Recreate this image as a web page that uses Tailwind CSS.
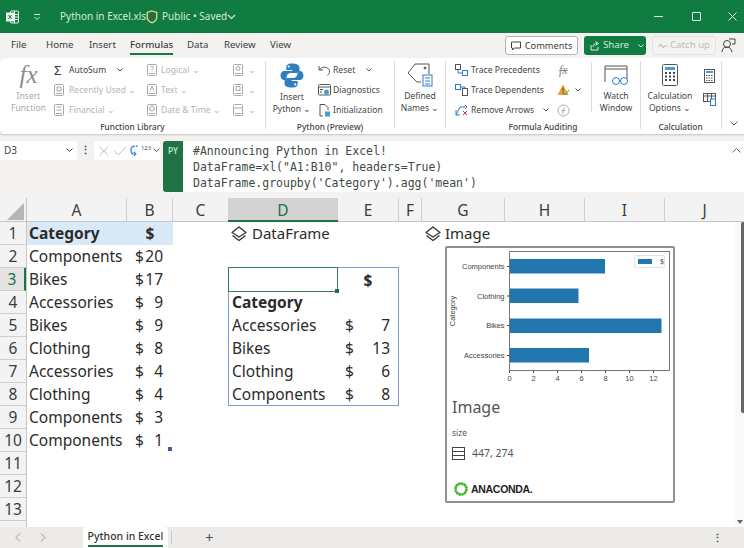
<!DOCTYPE html>
<html lang="en">
<head>
<meta charset="UTF-8">
<title>Python in Excel</title>
<script src="https://cdn.jsdelivr.net/npm/@tailwindcss/browser@4"></script>
</head>
<body class="w-[744px] h-[548px] overflow-hidden bg-[#f3f2f1] font-['Noto_Sans',sans-serif] text-[#333]">

<!-- title bar -->
<div class="h-[33px] bg-[#107c41] flex items-center text-[10px] text-[#d5eadd]">
  <svg class="ml-[6px] w-[13px] h-[14px]" viewBox="0 0 13 14" fill="none" stroke="#e8f3ec"><rect x="4.5" y="1" width="8" height="12" rx="1"/><path d="M4.5 4.5h8M4.5 7h8M4.5 9.500h8M8.500 1v12"/><rect x="0.500" y="3" width="7" height="8" fill="#e8f3ec"/><path d="M2.500 5l3 4M5.500 5l-3 4" stroke="#107c41"/></svg>
  <svg class="ml-[14px] w-[8px] h-[8px]" viewBox="0 0 8 8" fill="none" stroke="#d5eadd"><path d="M1 1.500h6M1.500 4l2.500 2.500L6.500 4"/></svg>
  <span class="ml-[19px] w-[81px] whitespace-nowrap">Python in Excel.xlsx</span>
  <svg class="ml-[5px] w-[12px] h-[14px]" viewBox="0 0 12 14" fill="#2d6a3d" stroke="#cfe39a" stroke-width="1.300"><path d="M6 1l4.800 1.500v4.500c0 3-2.300 4.800-4.800 5.800C3.500 11.800 1.200 10 1.200 7V2.500z"/></svg>
  <span class="ml-[4px] w-[63px] whitespace-nowrap">Public • Saved</span>
  <svg class="ml-[2px] w-[9px] h-[6px]" viewBox="0 0 9 6" fill="none" stroke="#d5eadd" stroke-width="1.200"><path d="M1 1l3.500 3.500L8 1"/></svg>
  <div class="ml-auto flex items-center">
    <div class="w-[9px] h-px bg-[#d5eadd]"></div>
    <div class="ml-[29px] w-[9px] h-[9px] border border-[#e2f0e7] rounded-[1px]"></div>
    <svg class="ml-[27px] mr-[7px] w-[9px] h-[9px]" viewBox="0 0 9 9" fill="none" stroke="#e2f0e7"><path d="M0.500 0.500l8 8M8.500 0.500l-8 8"/></svg>
  </div>
</div>

<!-- tab row -->
<div class="h-[25px] flex items-center text-[9.700px] text-[#3c3c3c] relative">
  <span class="ml-[11px] w-[35px]">File</span>
  <span class="w-[43px]">Home</span>
  <span class="w-[41px]">Insert</span>
  <span class="w-[57px] font-medium relative">Formulas<span class="absolute left-0 top-[15px] w-[43px] h-[2px] bg-[#107c41]"></span></span>
  <span class="w-[37px]">Data</span>
  <span class="w-[46px]">Review</span>
  <span>View</span>
  <div class="ml-auto flex items-center">
    <div class="w-[73px] h-[19px] bg-white border border-[#b5b3b1] rounded-[3px] flex items-center justify-center gap-[4px] text-[9.300px]">
      <svg class="w-[10px] h-[10px]" viewBox="0 0 10 10" fill="none" stroke="#444"><path d="M0.500 1h9v6h-6l-2 2V7h-1z"/></svg>
      <span>Comments</span>
    </div>
    <div class="ml-[6px] w-[62px] h-[19px] bg-[#107c41] rounded-[3px] flex items-center pl-[6px] text-[#d5eadd]">
      <svg class="w-[10px] h-[10px]" viewBox="0 0 10 10" fill="none" stroke="#e2f0e7"><path d="M1 4v5h7V6M3 6c0-3 2-3.500 4-3.500M5.500 0.500l3 2-3 2"/></svg>
      <span class="ml-[3px]">Share</span>
      <svg class="ml-[9px] w-[6px] h-[4px]" viewBox="0 0 6 4" fill="none" stroke="#e2f0e7"><path d="M0.500 0.500L3 3l2.500-2.500"/></svg>
    </div>
    <div class="ml-[6px] w-[64px] h-[19px] border border-[#e3e1df] rounded-[3px] flex items-center justify-center gap-[3px] text-[#bdbbb9]">
      <svg class="w-[9px] h-[6px]" viewBox="0 0 9 6" fill="none" stroke="#bdbbb9"><path d="M0 3h2l1-2 2 4 1-2h3"/></svg>
      <span>Catch up</span>
    </div>
    <svg class="ml-[5px] mr-[8px] w-[15px] h-[15px]" viewBox="0 0 15 15" fill="none" stroke="#444"><circle cx="6" cy="6" r="3.500"/><path d="M1 14c0-3 2-5 5-5s4 2 5 5M8 1h6v5h-3"/></svg>
  </div>
</div>

<!-- ribbon -->
<div class="h-[76px] bg-white rounded-l-[4px] shadow-[0_1px_2px_rgba(0,0,0,0.2)] flex pt-[2px] text-[8.600px] text-[#4a4a4a] relative">

  <!-- function library -->
  <div class="w-[265px] flex flex-col">
    <div class="h-[60px] flex">
      <div class="w-[54px] flex flex-col items-center pl-[3px] text-[#a8a8a8] leading-[12px]">
        <span class="font-['Liberation_Serif',serif] italic text-[25px] leading-[30px] text-[#8c8c8c]">fx</span>
        <span>Insert</span>
        <span>Function</span>
      </div>
      <div class="w-[93px] flex flex-col">
        <div class="h-[20px] flex items-center text-[#3c3c3c]"><span class="w-[15px] text-[13px] leading-none">Σ</span>AutoSum
          <svg class="ml-[11px] w-[6px] h-[4px]" viewBox="0 0 6 4" fill="none" stroke="#555"><path d="M0.500 0.500L3 3l2.500-2.500"/></svg></div>
        <div class="h-[20px] flex items-center text-[#b4b4b4]"><svg class="w-[10px] h-[12px] mr-[5px]" viewBox="0 0 10 12" fill="none" stroke="#a8a8a8"><rect x="0.500" y="0.500" width="9" height="11" rx="1"/><path d="M3 3h4v4H3zM2 9.500h6"/></svg>Recently Used ⌄</div>
        <div class="h-[20px] flex items-center text-[#b4b4b4]"><svg class="w-[10px] h-[12px] mr-[5px]" viewBox="0 0 10 12" fill="none" stroke="#a8a8a8"><rect x="0.500" y="0.500" width="9" height="11" rx="1"/><path d="M2.500 3h5M2.500 6h5M2 9.500h6"/></svg>Financial ⌄</div>
      </div>
      <div class="w-[86px] flex flex-col text-[#b4b4b4]">
        <div class="h-[20px] flex items-center"><svg class="w-[10px] h-[12px] mr-[4px]" viewBox="0 0 10 12" fill="none" stroke="#a8a8a8"><rect x="0.500" y="0.500" width="9" height="11" rx="1"/><path d="M3.500 3.500c0-1.500 3-1.500 3 0 0 1-1.500 1-1.500 2.500M2 9.500h6"/></svg>Logical ⌄</div>
        <div class="h-[20px] flex items-center"><svg class="w-[10px] h-[12px] mr-[4px]" viewBox="0 0 10 12" fill="none" stroke="#a8a8a8"><rect x="0.500" y="0.500" width="9" height="11" rx="1"/><path d="M3 7l2-5 2 5M2 9.500h6"/></svg>Text ⌄</div>
        <div class="h-[20px] flex items-center"><svg class="w-[10px] h-[12px] mr-[4px]" viewBox="0 0 10 12" fill="none" stroke="#a8a8a8"><rect x="0.500" y="0.500" width="9" height="11" rx="1"/><circle cx="5" cy="4.500" r="2.500"/><path d="M2 9.500h6"/></svg>Date &amp; Time ⌄</div>
      </div>
      <div class="flex flex-col text-[#b4b4b4]">
        <div class="h-[20px] flex items-center"><svg class="w-[10px] h-[12px] mr-[5px]" viewBox="0 0 10 12" fill="none" stroke="#a8a8a8"><rect x="0.500" y="0.500" width="9" height="11" rx="1"/><circle cx="5" cy="4.500" r="2"/><path d="M2 9.500h6"/></svg>⌄</div>
        <div class="h-[20px] flex items-center"><svg class="w-[10px] h-[12px] mr-[5px]" viewBox="0 0 10 12" fill="none" stroke="#a8a8a8"><rect x="0.500" y="0.500" width="9" height="11" rx="1"/><path d="M3 2.500h4v4H3zM2 9.500h6"/></svg>⌄</div>
        <div class="h-[20px] flex items-center"><svg class="w-[10px] h-[12px] mr-[5px]" viewBox="0 0 10 12" fill="none" stroke="#a8a8a8"><rect x="0.500" y="0.500" width="9" height="11" rx="1"/><path d="M0.500 4h9M2 9.500h6"/></svg>⌄</div>
      </div>
    </div>
    <div class="text-center text-[8.300px] font-medium leading-[13px] text-[#444]">Function Library</div>
  </div>
  <div class="w-px h-[68px] mt-[1px] bg-[#dcdcdc]"></div>

  <!-- python -->
  <div class="w-[128px] flex flex-col">
    <div class="h-[60px] flex">
      <div class="w-[52px] flex flex-col items-center leading-[12px] text-[#444]">
        <svg class="mt-[3px] w-[24px] h-[25px]" viewBox="0 0 24 25"><path fill="#2f7fc1" d="M11.800 0.500c-4.500 0-5.500 1.800-5.500 3.800v2.700h6v1H4.200C2 8 0.500 9.800 0.500 12.500s1.500 4.500 3.700 4.500h2.300v-3c0-2.300 2-4 4.200-4h5.500c1.800 0 3.300-1.500 3.300-3.300V4.300C19 2 16.800 0.500 11.800 0.500zM8.700 2.500a1.100 1.100 0 1 1 0 2.200 1.100 1.100 0 0 1 0-2.200z"/><path fill="#2f7fc1" d="M12.200 24.500c4.500 0 5.500-1.800 5.500-3.800V18h-6v-1h8.100c2.200 0 3.700-1.800 3.700-4.500S22 8 19.800 8h-2.300v3c0 2.300-2 4-4.200 4H7.800C6 15 4.500 16.500 4.500 18.300v2.400C4.500 23 7.200 24.500 12.200 24.500zM15.300 22.500a1.100 1.100 0 1 1 0-2.200 1.100 1.100 0 0 1 0 2.200z"/></svg>
        <span class="mt-[3px]">Insert</span>
        <span class="whitespace-nowrap">Python ⌄</span>
      </div>
      <div class="flex flex-col text-[#444]">
        <div class="h-[20px] flex items-center"><svg class="w-[13px] h-[11px] mr-[2px]" viewBox="0 0 13 11" fill="none" stroke="#555"><path d="M1 1v4h4M1.500 5c2-4 9-4 10 1 .3 2-1 3.500-2 4.500"/></svg>Reset
          <svg class="ml-[11px] w-[6px] h-[4px]" viewBox="0 0 6 4" fill="none" stroke="#555"><path d="M0.500 0.500L3 3l2.500-2.500"/></svg></div>
        <div class="h-[20px] flex items-center"><svg class="w-[13px] h-[12px] mr-[2px]" viewBox="0 0 13 12" fill="none" stroke="#555"><rect x="0.500" y="0.500" width="12" height="10.500" rx="1"/><path d="M0.500 3h12M2 5.500h3M2 8h2"/><circle cx="8.500" cy="8" r="2.500" fill="#4a9bd4" stroke="none"/></svg>Diagnostics</div>
        <div class="h-[20px] flex items-center"><svg class="w-[13px] h-[13px] mr-[2px]" viewBox="0 0 13 13" fill="none" stroke="#555"><path d="M2 12V0.500h5l3 3V6M2 12h3"/><rect x="7" y="7.500" width="5" height="5" fill="#4a9bd4" stroke="none"/></svg>Initialization</div>
      </div>
    </div>
    <div class="text-center text-[8.300px] font-medium leading-[13px] text-[#444]">Python (Preview)</div>
  </div>
  <div class="w-px h-[68px] mt-[1px] bg-[#dcdcdc]"></div>

  <!-- defined names -->
  <div class="w-[50px] flex flex-col items-center leading-[12px] text-[#444]">
    <svg class="mt-[3px] w-[26px] h-[24px]" viewBox="0 0 26 24" fill="none" stroke="#555"><path d="M8 1h14v10M8 1L1 10l9 9h4"/><circle cx="18" cy="5" r="1" fill="#555"/><rect x="16" y="12" width="9" height="11" fill="#fff" stroke="#2b7cd3"/><path d="M18 15h5M18 18h5M18 21h5" stroke="#2b7cd3"/></svg>
    <span class="mt-[3px]">Defined</span>
    <span class="whitespace-nowrap">Names ⌄</span>
  </div>
  <div class="w-px h-[68px] mt-[1px] bg-[#dcdcdc]"></div>

  <!-- formula auditing -->
  <div class="w-[194px] flex flex-col">
    <div class="h-[60px] flex">
      <div class="w-[111px] pl-[9px] flex-none flex flex-col text-[#444]">
        <div class="h-[20px] flex items-center"><svg class="w-[13px] h-[12px] mr-[3px]" viewBox="0 0 13 12" fill="none" stroke="#555"><rect x="0.500" y="0.500" width="5" height="5"/><rect x="7.500" y="6.500" width="5" height="5" stroke="#2b7cd3"/><path d="M3 5.500V9h4.500" stroke="#2b7cd3"/></svg>Trace Precedents</div>
        <div class="h-[20px] flex items-center"><svg class="w-[13px] h-[12px] mr-[3px]" viewBox="0 0 13 12" fill="none" stroke="#555"><rect x="0.500" y="0.500" width="5" height="5" stroke="#2b7cd3"/><rect x="7.500" y="4.500" width="5" height="7"/><path d="M5.500 3H10v1.500" stroke="#2b7cd3"/></svg>Trace Dependents</div>
        <div class="h-[20px] flex items-center"><svg class="w-[13px] h-[12px] mr-[3px]" viewBox="0 0 13 12" fill="none" stroke="#2b7cd3"><path d="M1 11L5 3h5M10 1l2 2-2 2M1 6v5h4"/><path d="M8 7l4 4M12 7l-4 4" stroke="#d13438"/></svg>Remove Arrows
          <svg class="ml-[9px] w-[6px] h-[4px]" viewBox="0 0 6 4" fill="none" stroke="#555"><path d="M0.500 0.500L3 3l2.500-2.500"/></svg></div>
      </div>
      <div class="w-[34px] flex-none flex flex-col">
        <div class="h-[20px] flex items-center"><span class="font-['Liberation_Serif',serif] italic text-[12px] text-[#888] pl-[2px] line-through">fx</span></div>
        <div class="h-[20px] flex items-center"><svg class="w-[13px] h-[12px]" viewBox="0 0 13 12"><path d="M6 0.500L0.500 11h11z" fill="#e8a33d"/><path d="M6 3.500v4M6 8.500v1.500" stroke="#7a3b00"/><path d="M6 9l2 2 4-5" fill="none" stroke="#3e9b5f"/></svg>
          <svg class="ml-[5px] w-[6px] h-[4px]" viewBox="0 0 6 4" fill="none" stroke="#555"><path d="M0.500 0.500L3 3l2.500-2.500"/></svg></div>
        <div class="h-[20px] flex items-center"><svg class="w-[13px] h-[13px]" viewBox="0 0 13 13" fill="none" stroke="#aaa"><circle cx="6.500" cy="6.500" r="5.500"/><path d="M5 10c1 0 1-1 1.200-3s.5-3.500 1.800-3.500M4.500 6.500h4"/></svg></div>
      </div>
      <div class="w-px h-[50px] mt-[2px] bg-[#dcdcdc]"></div>
      <div class="flex-1 flex flex-col items-center leading-[12px] text-[#444]">
        <svg class="mt-[5px] w-[25px] h-[21px]" viewBox="0 0 25 21" fill="none" stroke="#555"><path d="M1 17V1h22v13M1 4h22"/><g stroke="#2b7cd3"><circle cx="12" cy="16" r="3.500"/><circle cx="20" cy="16" r="3.500"/><path d="M15.500 15.500h1"/></g></svg>
        <span class="mt-[4px]">Watch</span>
        <span>Window</span>
      </div>
    </div>
    <div class="text-center text-[8.300px] font-medium leading-[13px] text-[#444]">Formula Auditing</div>
  </div>
  <div class="w-px h-[68px] mt-[1px] bg-[#dcdcdc]"></div>

  <!-- calculation -->
  <div class="w-[80px] flex flex-col">
    <div class="h-[60px] flex">
      <div class="w-[58px] flex flex-col items-center leading-[12px] text-[#444]">
        <svg class="mt-[4px] w-[16px] h-[22px]" viewBox="0 0 16 22" fill="none" stroke="#555"><rect x="0.500" y="0.500" width="15" height="21" rx="1"/><rect x="3" y="3" width="10" height="3" fill="#4a9bd4" stroke="none"/><path d="M3 9h2M7 9h2M11 9h2M3 12.500h2M7 12.500h2M11 12.500h2M3 16h2M7 16h2M11 16h2" stroke="#444" stroke-width="2"/></svg>
        <span class="mt-[4px] whitespace-nowrap">Calculation</span>
        <span class="whitespace-nowrap">Options ⌄</span>
      </div>
      <div class="flex flex-col items-center pl-[1px] w-[20px]">
        <svg class="mt-[9px] w-[11px] h-[14px]" viewBox="0 0 11 14" fill="none" stroke="#555"><rect x="0.500" y="0.500" width="10" height="13"/><rect x="2" y="2" width="7" height="2" fill="#4a9bd4" stroke="none"/><path d="M2 6.500h7M2 9h7M2 11.500h7" stroke-dasharray="1.500 1"/></svg>
        <svg class="mt-[10px] w-[13px] h-[13px]" viewBox="0 0 13 13" fill="none" stroke="#555"><rect x="0.500" y="0.500" width="12" height="8"/><path d="M0.500 3h12M4.500 0.500v8M8.500 0.500v8"/><rect x="7.500" y="6" width="5" height="6.500" fill="#fff" stroke="#2b7cd3"/></svg>
      </div>
    </div>
    <div class="text-center text-[8.300px] font-medium leading-[13px] text-[#444] pr-[1px]">Calculation</div>
  </div>
  <div class="w-px h-[68px] mt-[1px] bg-[#dcdcdc]"></div>
  <svg class="absolute right-[6px] top-[63px] w-[8px] h-[5px]" viewBox="0 0 8 5" fill="none" stroke="#555"><path d="M0.500 0.500L4 4l3.500-3.500"/></svg>
</div>

<!-- formula bar -->
<div class="h-[64px] pt-[7px] flex text-[#444]">
  <div class="w-[77px] h-[19px] bg-white rounded-r-[3px] flex items-center pl-[4px] text-[10px]">D3
    <svg class="ml-auto mr-[4px] w-[7px] h-[5px]" viewBox="0 0 7 5" fill="none" stroke="#444"><path d="M0.500 0.500L3.500 3.500l3-3"/></svg></div>
  <div class="w-[17px] h-[19px] flex items-center justify-center font-bold text-[11px]">⋮</div>
  <div class="w-[66px] h-[19px] bg-white rounded-[3px] flex items-center pl-[5px]">
    <svg class="w-[10px] h-[10px]" viewBox="0 0 10 10" fill="none" stroke="#bbb"><path d="M0.500 0.500l9 9M9.500 0.500l-9 9"/></svg>
    <svg class="ml-[5px] w-[13px] h-[10px]" viewBox="0 0 13 10" fill="none" stroke="#bbb"><path d="M0.500 5l4 4 8-8.500"/></svg>
    <svg class="ml-[4px] w-[11px] h-[11px]" viewBox="0 0 11 11" fill="none" stroke="#2b7cd3" stroke-width="1.300"><path d="M5 1C2 1 1 3 1 5s1 4 3 4M4 7l2 2-2 2M8 1l-2 0"/></svg>
    <span class="text-[6px] leading-none -mt-[5px] text-[#555]">123</span>
    <svg class="ml-[2px] w-[7px] h-[5px]" viewBox="0 0 7 5" fill="none" stroke="#444"><path d="M0.500 0.500L3.500 3.500l3-3"/></svg>
  </div>
  <div class="ml-[3px] w-[20px] h-[51px] bg-[#217346] rounded-l-[3px] text-[#cfe6d8] text-[8.5px] font-medium text-center pt-[4px]">PY</div>
  <div class="flex-1 h-[51px] bg-white flex pl-[10px] pt-[2px]">
    <div class="font-['DejaVu_Sans_Mono',monospace] text-[11.5px] leading-[16px] text-[#3f4a46] whitespace-pre">#Announcing Python in Excel!
DataFrame=xl("A1:B10", headers=True)
DataFrame.groupby('Category').agg('mean')</div>
    <svg class="ml-auto mr-[3px] mt-[5px] w-[9px] h-[5px]" viewBox="0 0 9 5" fill="none" stroke="#666"><path d="M0.500 4.500L4.500 0.500l4 4"/></svg>
  </div>
</div>

<!-- sheet: column headers -->
<div class="flex h-[24px] text-[15.500px] leading-[24px] text-center text-[#3c3c3c] bg-[#f3f3f3] border-b border-[#c6c6c6]">
  <div class="w-[27px] relative border-r border-[#c6c6c6]"><div class="absolute right-[2px] bottom-[1px] w-0 h-0 border-l-[17px] border-l-transparent border-b-[17px] border-b-[#b5b5b5]"></div></div>
  <div class="w-[100px] border-r border-[#d0d0d0]">A</div>
  <div class="w-[46px] border-r border-[#d0d0d0]">B</div>
  <div class="w-[55px]">C</div>
  <div class="w-[110px] bg-[#d2d2d2] text-[#217346] border-b-2 border-[#217346] h-[24px]">D</div>
  <div class="w-[61px] border-r border-[#d0d0d0]">E</div>
  <div class="w-[23px] border-r border-[#d0d0d0]">F</div>
  <div class="w-[83px] border-r border-[#d0d0d0]">G</div>
  <div class="w-[80px] border-r border-[#d0d0d0]">H</div>
  <div class="w-[80px] border-r border-[#d0d0d0]">I</div>
  <div class="w-[79px]">J</div>
</div>

<!-- sheet: body -->
<div class="relative flex h-[305px] overflow-hidden">
  <div class="w-[27px] flex-none bg-[#f3f3f3] border-r border-[#c6c6c6] text-[15.500px] leading-[22px] text-center text-[#3c3c3c]">
    <div class="h-[23px] border-b border-[#cfcfcf]">1</div>
    <div class="h-[23px] border-b border-[#cfcfcf]">2</div>
    <div class="h-[23px] border-b border-[#cfcfcf] bg-[#e3e3e3] text-[#217346] border-r-2 border-r-[#217346]">3</div>
    <div class="h-[23px] border-b border-[#cfcfcf]">4</div>
    <div class="h-[23px] border-b border-[#cfcfcf]">5</div>
    <div class="h-[23px] border-b border-[#cfcfcf]">6</div>
    <div class="h-[23px] border-b border-[#cfcfcf]">7</div>
    <div class="h-[23px] border-b border-[#cfcfcf]">8</div>
    <div class="h-[23px] border-b border-[#cfcfcf]">9</div>
    <div class="h-[23px] border-b border-[#cfcfcf]">10</div>
    <div class="h-[23px] border-b border-[#cfcfcf]">11</div>
    <div class="h-[23px] border-b border-[#cfcfcf]">12</div>
    <div class="h-[23px] border-b border-[#cfcfcf]">13</div>
    <div class="h-[6px]"></div>
  </div>

  <div class="flex-1 bg-white grid grid-cols-[100px_46px_55px_110px_61px_23px_312px] grid-rows-[repeat(13,23px)] text-[15.500px] leading-[23px] text-[#2b2b2b] whitespace-nowrap">
    <!-- source table -->
    <div class="col-start-1 row-start-1 bg-[#dae9f8] pl-[2px] font-bold">Category</div>
    <div class="col-start-2 row-start-1 bg-[#dae9f8] text-center font-bold">$</div>
    <div class="col-start-1 row-start-2 pl-[2px]">Components</div><div class="col-start-2 row-start-2 flex justify-between pl-[8px] pr-[10px]"><span>$</span><span>20</span></div>
    <div class="col-start-1 row-start-3 pl-[2px]">Bikes</div><div class="col-start-2 row-start-3 flex justify-between pl-[8px] pr-[10px]"><span>$</span><span>17</span></div>
    <div class="col-start-1 row-start-4 pl-[2px]">Accessories</div><div class="col-start-2 row-start-4 flex justify-between pl-[8px] pr-[10px]"><span>$</span><span>9</span></div>
    <div class="col-start-1 row-start-5 pl-[2px]">Bikes</div><div class="col-start-2 row-start-5 flex justify-between pl-[8px] pr-[10px]"><span>$</span><span>9</span></div>
    <div class="col-start-1 row-start-6 pl-[2px]">Clothing</div><div class="col-start-2 row-start-6 flex justify-between pl-[8px] pr-[10px]"><span>$</span><span>8</span></div>
    <div class="col-start-1 row-start-7 pl-[2px]">Accessories</div><div class="col-start-2 row-start-7 flex justify-between pl-[8px] pr-[10px]"><span>$</span><span>4</span></div>
    <div class="col-start-1 row-start-8 pl-[2px]">Clothing</div><div class="col-start-2 row-start-8 flex justify-between pl-[8px] pr-[10px]"><span>$</span><span>4</span></div>
    <div class="col-start-1 row-start-9 pl-[2px]">Components</div><div class="col-start-2 row-start-9 flex justify-between pl-[8px] pr-[10px]"><span>$</span><span>3</span></div>
    <div class="col-start-1 row-start-10 pl-[2px]">Components</div><div class="col-start-2 row-start-10 flex justify-between pl-[8px] pr-[10px] relative"><span>$</span><span>1</span><span class="absolute right-[1px] bottom-[1px] w-[4px] h-[4px] bg-[#3c5aa6]"></span></div>

    <!-- DataFrame label -->
    <div class="col-start-4 col-span-2 row-start-1 flex items-center pl-[3px] text-[15px]">
      <svg class="w-[16px] h-[16px] mr-[5px]" viewBox="0 0 16 16" fill="none" stroke="#333" stroke-width="1.300" stroke-linejoin="round"><path d="M8 1l7 5.500L8 11 1 6.500z"/><path d="M1.500 9.500L8 14.500l6.500-5"/></svg>DataFrame
    </div>
    <!-- result table -->
    <div class="col-start-4 row-start-3 pl-[4px] border-l border-[#7b9cce] border-t -mt-px"></div>
    <div class="col-start-5 row-start-3 text-center font-bold border-r border-t border-[#7b9cce] -mt-px leading-[25px]">$</div>
    <div class="col-start-4 row-start-4 pl-[3px] font-bold border-l border-[#7b9cce]">Category</div>
    <div class="col-start-5 row-start-4 border-r border-[#7b9cce]"></div>
    <div class="col-start-4 row-start-5 pl-[3px] border-l border-[#7b9cce]">Accessories</div>
    <div class="col-start-5 row-start-5 border-r border-[#7b9cce] flex justify-between pl-[7px] pr-[8px]"><span>$</span><span>7</span></div>
    <div class="col-start-4 row-start-6 pl-[3px] border-l border-[#7b9cce]">Bikes</div>
    <div class="col-start-5 row-start-6 border-r border-[#7b9cce] flex justify-between pl-[7px] pr-[8px]"><span>$</span><span>13</span></div>
    <div class="col-start-4 row-start-7 pl-[3px] border-l border-[#7b9cce]">Clothing</div>
    <div class="col-start-5 row-start-7 border-r border-[#7b9cce] flex justify-between pl-[7px] pr-[8px]"><span>$</span><span>6</span></div>
    <div class="col-start-4 row-start-8 pl-[3px] border-l border-b border-[#7b9cce]">Components</div>
    <div class="col-start-5 row-start-8 border-r border-b border-[#7b9cce] flex justify-between pl-[7px] pr-[8px]"><span>$</span><span>8</span></div>

    <!-- Image label -->
    <div class="col-start-7 row-start-1 flex items-center pl-[3px] text-[15px]">
      <svg class="w-[16px] h-[16px] mr-[4px]" viewBox="0 0 16 16" fill="none" stroke="#333" stroke-width="1.300" stroke-linejoin="round"><path d="M8 1l7 5.500L8 11 1 6.500z"/><path d="M1.500 9.500L8 14.500l6.500-5"/></svg>Image
    </div>
  </div>

  <!-- selected cell D3 -->
  <div class="absolute left-[228px] top-[45px] w-[110px] h-[25px] border-[1.500px] border-[#2f7d52]"><span class="absolute -right-[2px] -bottom-[2px] w-[4px] h-[4px] bg-[#217346]"></span></div>

  <!-- image card -->
  <div class="absolute left-[445px] top-[24px] w-[230px] h-[257px] bg-white border-2 border-[#8f8f8f] rounded-[2px] text-[#555]">
    <svg class="block" width="226" height="137" viewBox="447 248 226 137" font-family="Liberation Sans, sans-serif" font-size="7.500" fill="#444">
      <rect x="509.500" y="259" width="95.500" height="14.500" fill="#2176ae"/>
      <rect x="509.500" y="288.500" width="69" height="14.500" fill="#2176ae"/>
      <rect x="509.500" y="318.500" width="152" height="14.500" fill="#2176ae"/>
      <rect x="509.500" y="348" width="79.500" height="14.500" fill="#2176ae"/>
      <path d="M509.500 251.500V370.500H669.500V251.500Z" fill="none" stroke="#777"/>
      <path d="M507 266.500h2.500M507 296h2.500M507 325.500h2.500M507 355.500h2.500" stroke="#444"/>
      <text x="504.500" y="269" text-anchor="end">Components</text>
      <text x="504.500" y="298.500" text-anchor="end">Clothing</text>
      <text x="504.500" y="328" text-anchor="end">Bikes</text>
      <text x="504.500" y="358" text-anchor="end">Accessories</text>
      <text transform="translate(455 311) rotate(-90)" text-anchor="middle">Category</text>
      <path d="M509.500 370.500v2.500M533.500 370.500v2.500M557.500 370.500v2.500M581.500 370.500v2.500M605.500 370.500v2.500M629.500 370.500v2.500M653.500 370.500v2.500" stroke="#444"/>
      <g text-anchor="middle">
        <text x="509.500" y="381">0</text><text x="533.500" y="381">2</text><text x="557.500" y="381">4</text><text x="581.500" y="381">6</text><text x="605.500" y="381">8</text><text x="629.500" y="381">10</text><text x="653.500" y="381">12</text>
      </g>
    </svg>
    <div class="absolute left-[187px] top-[7px] w-[31px] h-[13px] border border-[#e4e4e4] rounded-[2px] bg-white flex items-center pl-[3px] gap-[8px] text-[7px] leading-none text-[#444]"><span class="w-[14px] h-[5px] bg-[#2176ae]"></span><span>$</span></div>

    <div class="pl-[5px] mt-[11px] text-[16px] leading-[22px]">Image</div>
    <div class="pl-[5px] mt-[9px] text-[8.5px] leading-[12px]">size</div>
    <div class="pl-[5px] mt-[7px] flex items-center text-[10.5px] leading-[14px]">
      <svg class="w-[13px] h-[13px] mr-[7px]" viewBox="0 0 13 13" fill="none" stroke="#444"><rect x="0.500" y="0.500" width="12" height="12"/><path d="M0.500 4.500h12M0.500 8.500h12"/></svg>447, 274
    </div>
    <div class="absolute left-[7px] top-[234px] flex items-center">
      <svg class="w-[14px] h-[14px]" viewBox="0 0 14 14" fill="none"><circle cx="7" cy="7" r="5.500" stroke="#43b02a" stroke-width="2.600" stroke-dasharray="2.500 0.300"/></svg>
      <span class="ml-[3px] font-['Liberation_Sans',sans-serif] text-[10.5px] font-bold tracking-[-0.3px] leading-none text-[#222]">ANACONDA.</span>
    </div>
  </div>

  <!-- scrollbar -->
  <div class="absolute right-0 top-0 bottom-0 w-[9px] bg-[#f9f9f9]">
    <div class="absolute right-0 top-0 w-[3px] h-[191px] bg-[#666] rounded-l-[2px]"></div>
    <div class="absolute right-[1px] bottom-[3px] w-0 h-0 border-x-[3px] border-x-transparent border-t-[4px] border-t-[#666]"></div>
  </div>
</div>

<!-- sheet tabs -->
<div class="h-[21px] flex items-center bg-[#edebe9] text-[#555]">
  <svg class="ml-[15px] w-[6px] h-[9px]" viewBox="0 0 6 9" fill="none" stroke="#999"><path d="M5 0.500L1 4.500l4 4"/></svg>
  <svg class="ml-[19px] w-[6px] h-[9px]" viewBox="0 0 6 9" fill="none" stroke="#999"><path d="M1 0.500L5 4.500l-4 4"/></svg>
  <div class="ml-[37px] w-[85px] h-[21px] bg-white rounded-t-[4px] flex flex-col items-center text-[10.5px] font-medium leading-[18px] text-[#333]">
    <span class="border-b-2 border-[#217346] h-[20px] whitespace-nowrap">Python in Excel</span>
  </div>
  <div class="ml-[3px] w-px h-[13px] bg-[#c8c8c8]"></div>
  <span class="ml-[33px] text-[15px] leading-none text-[#555]">+</span>
  <span class="ml-auto mr-[21px] text-[11px] font-bold leading-none">⋮</span>
</div>

</body>
</html>
